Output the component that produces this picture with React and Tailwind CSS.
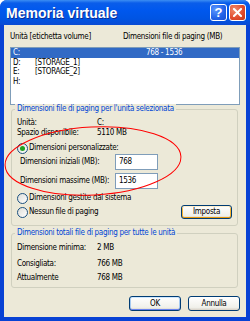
import React from 'react';

const font = "font-['DejaVu_Sans_Condensed','DejaVu_Sans',sans-serif]";

const Radio = ({ checked }) => (
  <span className="w-[11px] h-[11px] rounded-full border border-[#1C5180] bg-[linear-gradient(135deg,#DCDCD7,#FFFFFF)] flex items-center justify-center shrink-0">
    {checked && <span className="w-[5px] h-[5px] rounded-full bg-[#21A121]" />}
  </span>
);

const XpButton = ({ children, width, focus }) => (
  <button
    className={`h-full ${width} rounded-[3px] border border-[#003C74] bg-[linear-gradient(to_bottom,#FFFFFF,#F0F0EA_80%,#D6D0C5)] text-[8px] tracking-[-0.3px] leading-none text-black ${
      focus === 'orange'
        ? 'shadow-[inset_0_1px_0_#FFF0CF,inset_0_-1px_0_#E5970C,inset_1px_0_0_#F8B330,inset_-1px_0_0_#F8B330]'
        : focus === 'blue'
        ? 'shadow-[inset_0_1px_0_#CEE7FF,inset_0_-1px_0_#6982EE,inset_1px_0_0_#A6CAF0,inset_-1px_0_0_#A6CAF0]'
        : ''
    }`}
  >
    {children}
  </button>
);

const GroupBox = ({ label, height, children }) => (
  <div className={`relative ml-[7px] w-[227px] ${height} rounded-[3px] border border-[#D0D0BF]`}>
    <span className="absolute -top-[6px] left-[3px] px-[2px] bg-[#ECE9D8] text-[#0046D5] leading-[10px] whitespace-nowrap">{label}</span>
    {children}
  </div>
);

const InfoRow = ({ label, value, className = '' }) => (
  <div className={`flex h-[10px] leading-[10px] pl-[5px] whitespace-nowrap ${className}`}>
    <span className="w-[80px]">{label}</span>
    <span>{value}</span>
  </div>
);

const drives = [
  { id: 'C:', label: '', size: '768 - 1536', selected: true },
  { id: 'D:', label: '[STORAGE_1]', size: '' },
  { id: 'E:', label: '[STORAGE_2]', size: '' },
  { id: 'H:', label: '', size: '' },
];

export default function App() {
  return (
    <div className={`w-[250px] h-[321px] flex flex-col bg-[#0842D4] rounded-t-[7px] overflow-hidden ${font}`}>
      {/* Title bar */}
      <div className="h-[25px] shrink-0 flex items-center justify-between pl-[6px] pr-[4px] bg-[linear-gradient(to_bottom,#3C8EF3_0%,#0A5DEA_12%,#0058EE_40%,#0054E3_75%,#0A4BD3_100%)]">
        <span className="font-['Liberation_Sans',Arial,sans-serif] text-white font-bold text-[14px] leading-none [text-shadow:1px_1px_0_#0C2E94]">Memoria virtuale</span>
        <div className="flex gap-[2px]">
          <div className="w-[17px] h-[17px] rounded-[3px] border border-white bg-[radial-gradient(circle_at_30%_30%,#5A97FF,#2262E8_60%,#1A4FD0)] flex items-center justify-center text-white font-bold text-[13px] leading-none font-['Liberation_Sans',Arial,sans-serif]">
            ?
          </div>
          <div className="w-[17px] h-[17px] rounded-[3px] border border-white bg-[radial-gradient(circle_at_30%_30%,#F08A6A,#E04A2C_60%,#C23818)] flex items-center justify-center">
            <svg width="9" height="9" viewBox="0 0 9 9">
              <path d="M1 1 L8 8 M8 1 L1 8" stroke="#FFFFFF" strokeWidth="2" strokeLinecap="square" />
            </svg>
          </div>
        </div>
      </div>

      {/* Body */}
      <div className="relative mx-[4px] mb-[4px] h-[292px] bg-[#ECE9D8] text-[8px] tracking-[-0.3px] text-black">
        <div className="flex h-[10px] leading-[10px] mt-[7px] pl-[6px] whitespace-nowrap">
          <span className="w-[113px]">Unità [etichetta volume]</span>
          <span>Dimensioni file di paging (MB)</span>
        </div>

        <div className="ml-[6px] mt-[5px] w-[230px] h-[58px] border border-[#7F9DB9] bg-white">
          {drives.map((d) => (
            <div
              key={d.id}
              className={`flex h-[9.5px] leading-[9.5px] pl-[2px] whitespace-nowrap ${d.selected ? 'bg-[#316AC5] text-white' : ''}`}
            >
              <span className="w-[22px]">{d.id}</span>
              <span className="w-[111px]">{d.label}</span>
              <span>{d.size}</span>
            </div>
          ))}
        </div>

        <div className="h-[4px]" />
        <GroupBox label="Dimensioni file di paging per l'unità selezionata" height="h-[117px]">
          <InfoRow label="Unità:" value="C:" className="mt-[8px]" />
          <InfoRow label="Spazio disponibile:" value="5110 MB" />
          <div className="flex items-center gap-[1px] h-[10px] leading-[10px] pl-[5px] mt-[5px] whitespace-nowrap">
            <Radio checked />
            <span>Dimensioni personalizzate:</span>
          </div>
          <div className="flex items-center h-[16px] mt-[1px] pl-[8px] whitespace-nowrap">
            <span className="w-[95px]">Dimensioni iniziali (MB):</span>
            <div className="w-[43px] h-full border border-[#7F9DB9] bg-white flex items-center pl-[3px]">768</div>
          </div>
          <div className="flex items-center h-[16px] mt-[3px] pl-[8px] whitespace-nowrap">
            <span className="w-[95px]">Dimensioni massime (MB):</span>
            <div className="w-[43px] h-full border border-[#7F9DB9] bg-white flex items-center pl-[3px]">1536</div>
          </div>
          <div className="flex items-center gap-[1px] h-[10px] leading-[10px] pl-[5px] mt-[4px] whitespace-nowrap">
            <Radio />
            <span>Dimensioni gestite dal sistema</span>
          </div>
          <div className="flex items-center justify-between h-[14px] mt-[2px] pl-[5px] pr-[5px] whitespace-nowrap">
            <div className="flex items-center gap-[1px]">
              <Radio />
              <span>Nessun file di paging</span>
            </div>
            <XpButton width="w-[51px]" focus="orange">Imposta</XpButton>
          </div>
        </GroupBox>

        <div className="h-[7px]" />
        <GroupBox label="Dimensioni totali file di paging per tutte le unità" height="h-[55px]">
          <InfoRow label="Dimensione minima:" value="2 MB" className="mt-[9px]" />
          <InfoRow label="Consigliata:" value="766 MB" className="mt-[6px]" />
          <InfoRow label="Attualmente" value="768 MB" className="mt-[4px]" />
        </GroupBox>

        <div className="flex justify-end gap-[7px] h-[15px] mt-[8px] pr-[6px]">
          <XpButton width="w-[52px]" focus="blue">OK</XpButton>
          <XpButton width="w-[52px]">Annulla</XpButton>
        </div>

        {/* Red annotation ellipse */}
        <svg className="absolute left-0 top-0 pointer-events-none" width="242" height="292">
          <ellipse cx="89" cy="136" rx="88" ry="34" fill="none" stroke="#FF0000" strokeWidth="1" transform="rotate(-3 89 136)" />
        </svg>
      </div>
    </div>
  );
}
